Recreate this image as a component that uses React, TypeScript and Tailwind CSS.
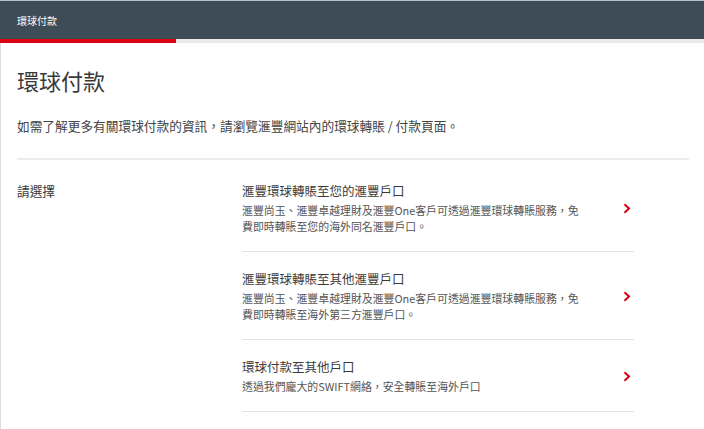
import React from 'react';

type Option = {
    title: string;
    desc: string;
}

const options: Option[] = [
    {
        title: '滙豐環球轉賬至您的滙豐戶口',
        desc: '滙豐尚玉、滙豐卓越理財及滙豐One客戶可透過滙豐環球轉賬服務，免費即時轉賬至您的海外同名滙豐戶口。',
    },
    {
        title: '滙豐環球轉賬至其他滙豐戶口',
        desc: '滙豐尚玉、滙豐卓越理財及滙豐One客戶可透過滙豐環球轉賬服務，免費即時轉賬至海外第三方滙豐戶口。',
    },
    {
        title: '環球付款至其他戶口',
        desc: '透過我們龐大的SWIFT網絡，安全轉賬至海外戶口',
    },
];

const Chevron = () => (
    <svg width="8" height="11" viewBox="0 0 8 11" fill="none">
        <path d="M1.5 1.2 L6 5.5 L1.5 9.8" stroke="#db0011" strokeWidth="2" />
    </svg>
);

const App = () => {
    return (
        <div className="min-h-[429px] w-[704px] bg-white font-['Noto_Sans_CJK_TC','Noto_Sans',sans-serif] text-[#3a3a3a]">
            <header className="border-t border-[#b8c0c6] bg-[#3e4c58]">
                <div className="flex h-[38px] items-center px-[17px] text-[10px] text-white">環球付款</div>
                <div className="h-1 bg-[#ebe9ea]">
                    <div className="h-1 w-[176px] bg-[#db0011]" />
                </div>
            </header>

            <main className="min-h-[386px] border-l border-[#dcdcdc] pl-[16px] pr-[15px]">
                <h1 className="pt-[21px] text-[22px] leading-[32px] font-normal">環球付款</h1>
                <p className="mt-[21px] text-[12.7px] leading-[18px] text-[#444]">
                    如需了解更多有關環球付款的資訊，請瀏覽滙豐網站內的環球轉賬 / 付款頁面。
                </p>
                <div className="mt-[23px] h-[2px] bg-[#ececec]" />

                <section className="flex pt-[22px]">
                    <div className="w-[225px] shrink-0 text-[12.7px] leading-[17px]">請選擇</div>
                    <ul className="w-[392px]">
                        {options.map((opt, i) => (
                            <li key={i} className={`border-b border-[#e3e3e3] pb-[17px] ${i === 0 ? 'pt-0' : 'pt-[18px]'}`}>
                                <div className="flex items-center">
                                    <div className="w-[352px]">
                                        <div className="text-[12.5px] leading-[17px]">{opt.title}</div>
                                        <div className="mt-[3px] w-[345px] text-[10.9px] leading-[16px] text-[#555]">{opt.desc}</div>
                                    </div>
                                    <div className="ml-[29px] flex">
                                        <Chevron />
                                    </div>
                                </div>
                            </li>
                        ))}
                    </ul>
                </section>
            </main>
        </div>
    );
};

export default App;
